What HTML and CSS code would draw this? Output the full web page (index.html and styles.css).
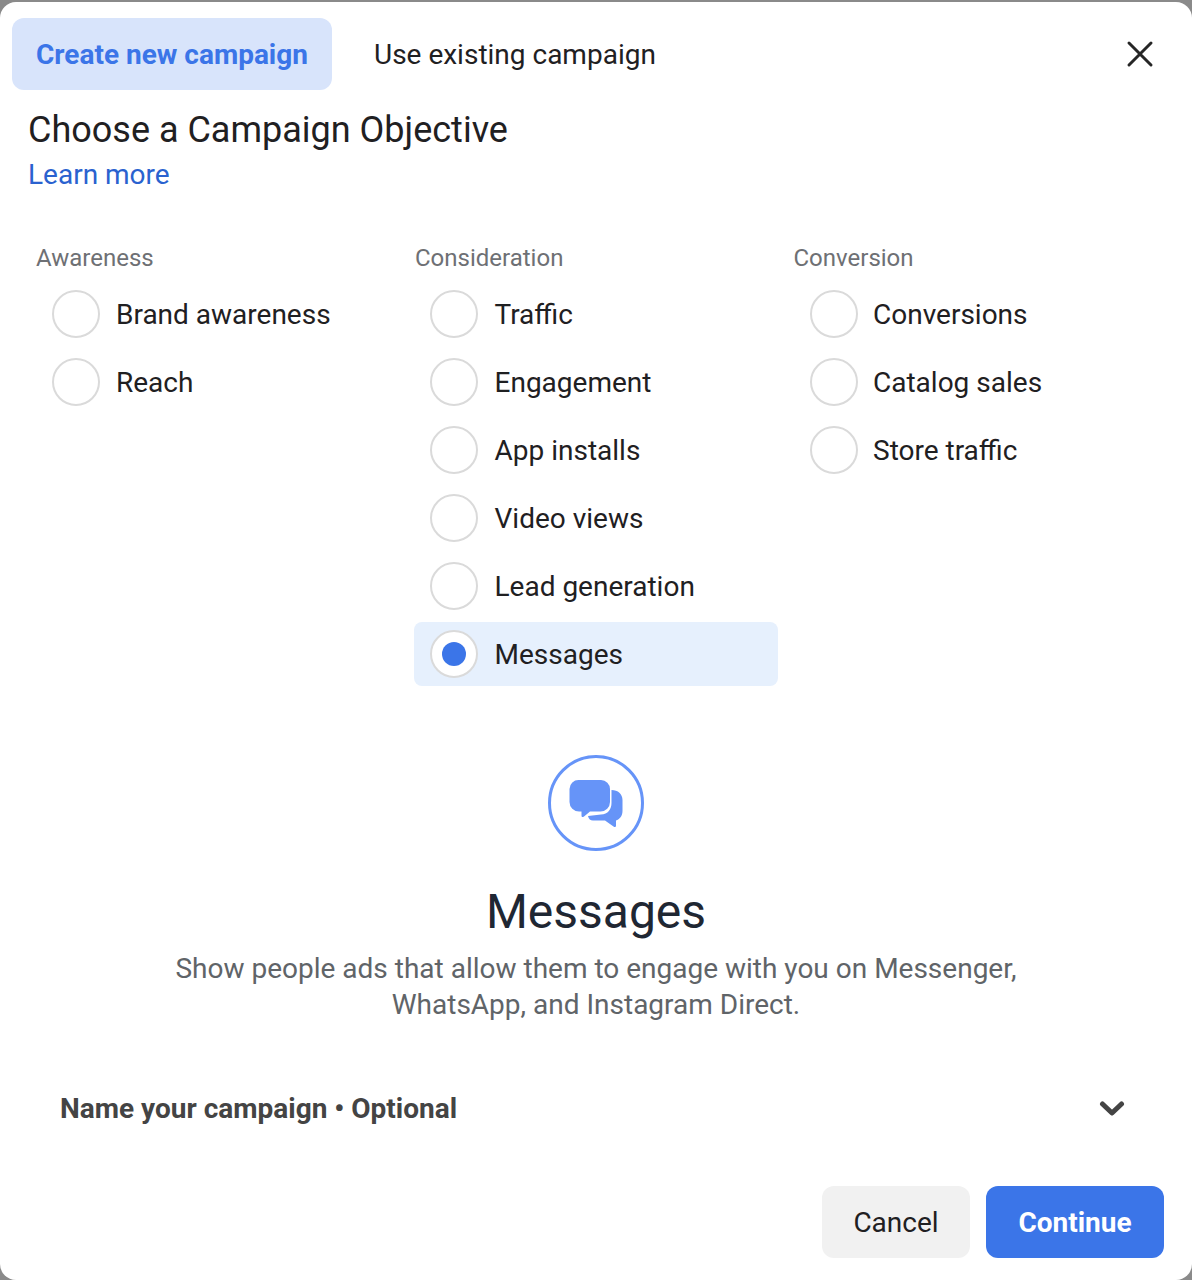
FILE: index.html
```html
<!DOCTYPE html>
<html lang="en">
<head>
    <meta charset="UTF-8">
    <title>Choose a Campaign Objective</title>
    <link rel="stylesheet" href="styles.css">
</head>
<body>
    <div class="dialog">
        <div class="tabs">
            <div class="tab tab-active">Create new campaign</div>
            <div class="tab">Use existing campaign</div>
            <svg class="close-icon" width="28" height="28" viewBox="0 0 28 28">
                <path d="M3 3 L25 25 M25 3 L3 25" stroke="#262626" stroke-width="3" stroke-linecap="round" fill="none"/>
            </svg>
        </div>

        <div class="heading">
            <h1>Choose a Campaign Objective</h1>
            <a class="learn-more" href="#">Learn more</a>
        </div>

        <div class="objectives">
            <div class="column">
                <div class="column-title">Awareness</div>
                <div class="option"><span class="radio"></span>Brand awareness</div>
                <div class="option"><span class="radio"></span>Reach</div>
            </div>
            <div class="column column-middle">
                <div class="column-title">Consideration</div>
                <div class="option"><span class="radio"></span>Traffic</div>
                <div class="option"><span class="radio"></span>Engagement</div>
                <div class="option"><span class="radio"></span>App installs</div>
                <div class="option"><span class="radio"></span>Video views</div>
                <div class="option"><span class="radio"></span>Lead generation</div>
                <div class="option option-selected"><span class="radio radio-checked"></span>Messages</div>
            </div>
            <div class="column column-last">
                <div class="column-title">Conversion</div>
                <div class="option"><span class="radio"></span>Conversions</div>
                <div class="option"><span class="radio"></span>Catalog sales</div>
                <div class="option"><span class="radio"></span>Store traffic</div>
            </div>
        </div>

        <div class="summary">
            <div class="summary-icon">
                <svg width="54" height="50" viewBox="0 0 54 50">
                    <path fill="#6694f8" d="M10 2 H32 A9 9 0 0 1 41 11 V24 A9.5 9.5 0 0 1 31.5 33.5 H21 L15 38.5 Q12.5 40 12.5 37.5 V33.5 H10 A9.5 9.5 0 0 1 0.5 24 V11 A9 9 0 0 1 10 2 Z"/>
                    <path fill="#6694f8" d="M42.5 12 C49 12 53.5 16 53.5 22 V33 C53.5 38 50.5 41.5 47 42.5 V47.5 Q47 50 44.5 48.5 L36 42.5 H24 Q20 42.5 19 38 L32 36.5 C39 36.5 42.5 31 42.5 25 Z"/>
                </svg>
            </div>
            <h2>Messages</h2>
            <p>Show people ads that allow them to engage with you on Messenger,<br>WhatsApp, and Instagram Direct.</p>
        </div>

        <div class="name-row">
            <span>Name your campaign • Optional</span>
            <svg class="chevron" width="26" height="18" viewBox="0 0 26 18">
                <path d="M3.5 4 L13 13 L22.5 4" stroke="#444444" stroke-width="5" stroke-linecap="round" stroke-linejoin="round" fill="none"/>
            </svg>
        </div>

        <div class="footer">
            <button class="btn btn-cancel">Cancel</button>
            <button class="btn btn-continue">Continue</button>
        </div>
    </div>
</body>
</html>
```

FILE: styles.css
```css
html, body {
    margin: 0;
    padding: 0;
}

body {
    background-color: #8a8a8a;
    font-family: Roboto, "Liberation Sans", sans-serif;
    color: #1f2022;
    height: 1280px;
    overflow: hidden;
}

.dialog {
    box-sizing: border-box;
    height: 1278px;
    margin-top: 2px;
    background-color: #ffffff;
    border-radius: 16px;
    padding: 16px 12px 0;
}

.tabs {
    display: flex;
    align-items: center;
    height: 72px;
    gap: 18px;
}

.tab {
    font-size: 28px;
    padding: 0 24px;
    line-height: 74px;
    height: 72px;
    border-radius: 12px;
}

.tab-active {
    background-color: #d8e4fb;
    color: #3b75e8;
    font-weight: 700;
}

.close-icon {
    margin-left: auto;
    margin-right: 26px;
}

.heading {
    padding: 17px 16px 0;
}

h1 {
    margin: 0;
    font-size: 36px;
    line-height: 46px;
    font-weight: 400;
}

.learn-more {
    display: block;
    font-size: 28px;
    line-height: 44px;
    color: #2a62cf;
    text-decoration: none;
}

.objectives {
    display: flex;
    margin-top: 46px;
    padding-left: 24px;
    height: 512px;
}

.column {
    width: 379px;
    display: flex;
    flex-direction: column;
    gap: 4px;
}

.column-middle {
    width: 378.5px;
}

.column-title {
    font-size: 24px;
    line-height: 30px;
    margin-bottom: 5px;
    color: #6e7074;
}

.option {
    display: flex;
    align-items: center;
    width: 364px;
    height: 64px;
    padding-left: 16px;
    box-sizing: border-box;
    font-size: 28px;
    border-radius: 8px;
}

.column-middle .option {
    margin-left: -1px;
}

.option-selected {
    background-color: #e6f0fd;
}

.radio {
    box-sizing: border-box;
    width: 48px;
    height: 48px;
    margin-right: 16px;
    border: 2px solid #dadada;
    border-radius: 50%;
    background-color: #ffffff;
    display: flex;
    align-items: center;
    justify-content: center;
}

.column-middle .radio {
    margin-right: 16.5px;
}

.column-last .radio {
    margin-right: 15.5px;
}

.radio-checked::after {
    content: "";
    width: 24px;
    height: 24px;
    border-radius: 50%;
    background-color: #3b75e8;
}

.summary {
    display: flex;
    flex-direction: column;
    align-items: center;
    margin-left: -12px;
    margin-right: -12px;
}

.summary-icon {
    box-sizing: border-box;
    width: 96px;
    height: 96px;
    border: 3px solid #6694f8;
    border-radius: 50%;
    display: flex;
    align-items: center;
    justify-content: center;
}

h2 {
    margin: 29px 0 0;
    font-size: 48px;
    line-height: 64px;
    font-weight: 400;
    color: #1f2733;
}

.summary p {
    margin: 7px 0 0;
    font-size: 28px;
    line-height: 36px;
    text-align: center;
    color: #606468;
}

.name-row {
    display: flex;
    justify-content: space-between;
    align-items: center;
    margin-top: 66px;
    padding: 0 55px 0 48px;
    font-size: 28px;
    line-height: 40px;
    font-weight: 700;
    color: #444444;
}

.footer {
    display: flex;
    justify-content: flex-end;
    gap: 16px;
    margin-top: 57px;
    padding-right: 16px;
}

.btn {
    height: 72px;
    border: none;
    border-radius: 12px;
    font-family: inherit;
    font-size: 28px;
    padding-top: 2px;
}

.btn-cancel {
    width: 148px;
    background-color: #f1f1f1;
    color: #1f2022;
}

.btn-continue {
    width: 178px;
    background-color: #3b75e8;
    color: #ffffff;
    font-weight: 700;
}
```
